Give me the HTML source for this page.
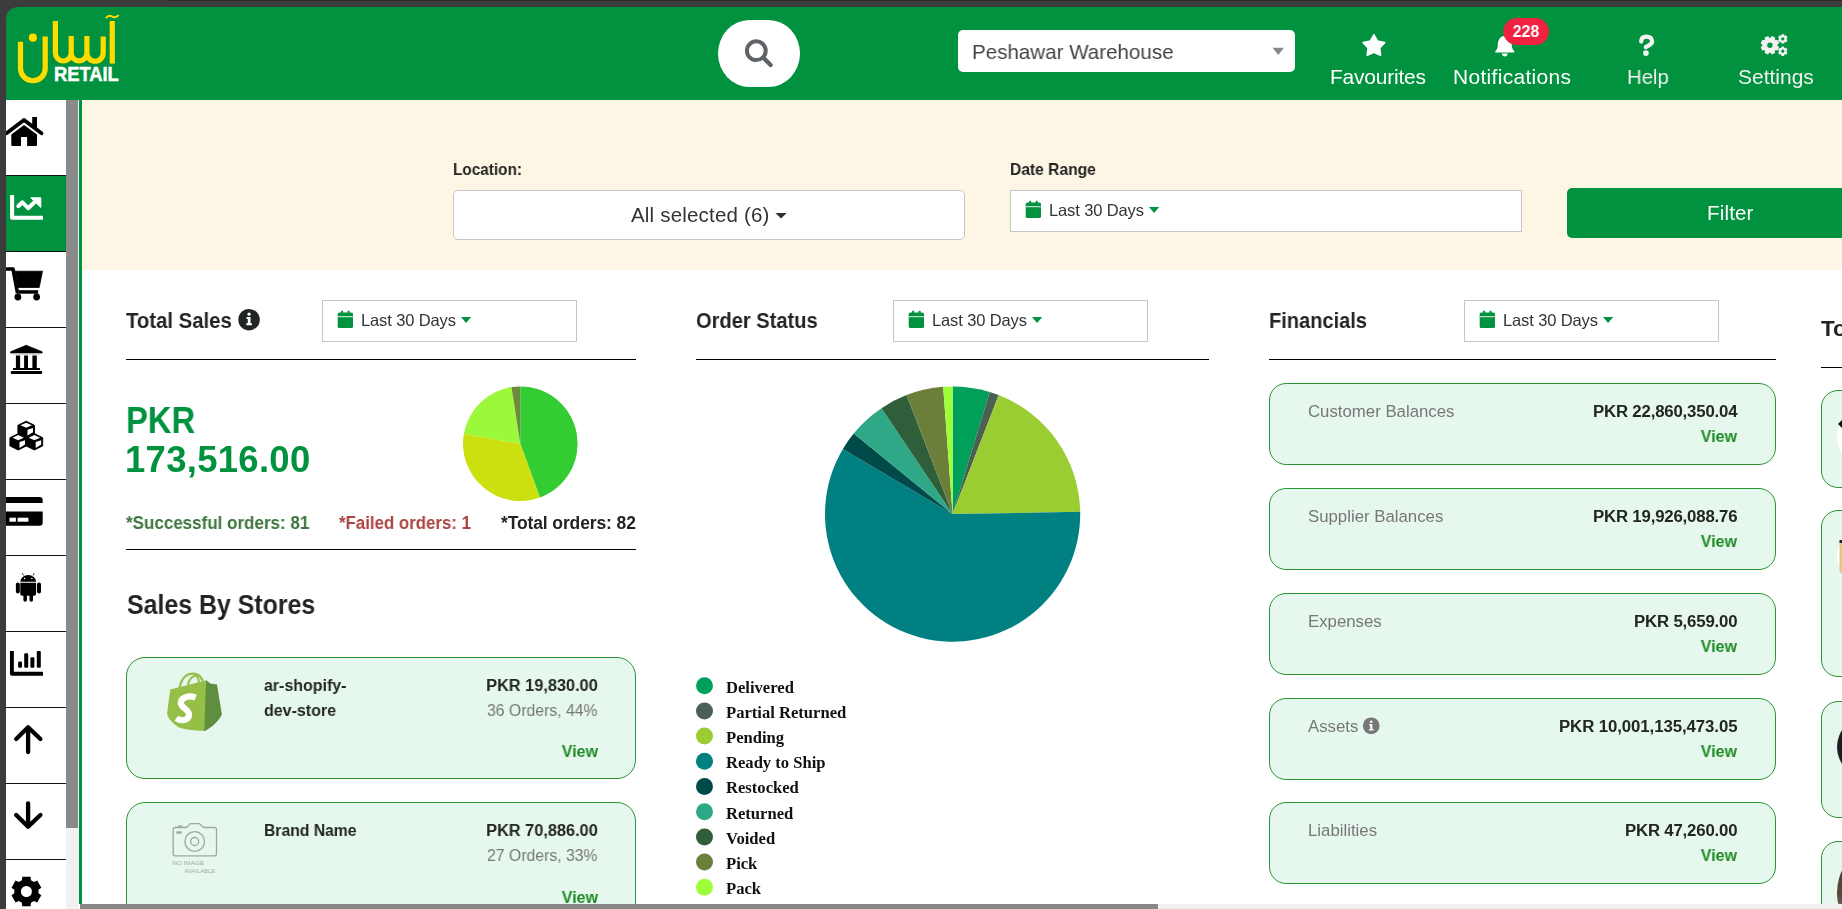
<!DOCTYPE html>
<html><head><meta charset="utf-8"><style>
html,body{margin:0;padding:0;width:1842px;height:909px;overflow:hidden;background:#fff}
body{position:relative;font-family:"Liberation Sans", sans-serif}
.b{position:absolute}
.t{position:absolute;white-space:pre;will-change:transform}
svg.ov{position:absolute;left:0;top:0;width:1842px;height:909px;overflow:hidden}
</style></head><body>
<div class=b style='left:0px;top:0px;width:1842px;height:7px;background:#3c3c3c'></div>
<div class=b style='left:168px;top:0px;width:1674px;height:1px;background:#2c2c2c'></div>
<div class=b style='left:0px;top:0px;width:6px;height:909px;background:#3c3c3c'></div>
<div class=b style='left:6px;top:7px;width:20px;height:20px;background:#3c3c3c'></div>
<div class=b style='left:6px;top:7px;width:1836px;height:93px;background:#00923f;border-top-left-radius:12px'></div>
<div class=b style='left:718px;top:20px;width:82px;height:67px;background:#fff;border-radius:32px/34px'></div>
<div class=b style='left:958px;top:30px;width:337px;height:42px;background:#fff;border-radius:5px'></div>
<div class=b style='left:6px;top:100px;width:60px;height:809px;background:#fff'></div>
<div class=b style='left:6px;top:176px;width:60px;height:75.5px;background:#00923f'></div>
<div class=b style='left:6px;top:175.0px;width:60px;height:1px;background:#111'></div>
<div class=b style='left:6px;top:251.0px;width:60px;height:1px;background:#111'></div>
<div class=b style='left:6px;top:327.0px;width:60px;height:1px;background:#111'></div>
<div class=b style='left:6px;top:403.0px;width:60px;height:1px;background:#111'></div>
<div class=b style='left:6px;top:479.0px;width:60px;height:1px;background:#111'></div>
<div class=b style='left:6px;top:555.0px;width:60px;height:1px;background:#111'></div>
<div class=b style='left:6px;top:631.0px;width:60px;height:1px;background:#111'></div>
<div class=b style='left:6px;top:707.0px;width:60px;height:1px;background:#111'></div>
<div class=b style='left:6px;top:783.0px;width:60px;height:1px;background:#111'></div>
<div class=b style='left:6px;top:859.0px;width:60px;height:1px;background:#111'></div>
<div class=b style='left:66.3px;top:100px;width:12.4px;height:809px;background:#f1f1f1'></div>
<div class=b style='left:66.3px;top:100px;width:12.2px;height:728px;background:#8a8a8a'></div>
<div class=b style='left:78.5px;top:100px;width:0.5px;height:804px;background:#fff'></div>
<div class=b style='left:79px;top:100px;width:2.6px;height:804px;background:#00923f'></div>
<div class=b style='left:81.6px;top:100px;width:1761px;height:170px;background:#fdf6e4'></div>
<div class=b style='left:453px;top:190px;width:512px;height:50px;background:#fff;border:1px solid #c6c6c6;border-radius:5px;box-sizing:border-box'></div>
<div class=b style='left:1010px;top:190px;width:512px;height:42px;background:#fff;border:1px solid #c6c6c6;box-sizing:border-box'></div>
<div class=b style='left:1567px;top:188px;width:326px;height:50px;background:#00923f;border-radius:5px'></div>
<div class=b style='left:322px;top:300px;width:255px;height:42px;background:#fff;border:1px solid #c6c6c6;box-sizing:border-box'></div>
<div class=b style='left:126px;top:358.6px;width:510px;height:1.6px;background:#000'></div>
<div class=b style='left:893px;top:300px;width:255px;height:42px;background:#fff;border:1px solid #c6c6c6;box-sizing:border-box'></div>
<div class=b style='left:696px;top:358.6px;width:513px;height:1.6px;background:#000'></div>
<div class=b style='left:1464px;top:300px;width:255px;height:42px;background:#fff;border:1px solid #c6c6c6;box-sizing:border-box'></div>
<div class=b style='left:1269px;top:358.6px;width:507px;height:1.6px;background:#000'></div>
<div class=b style='left:1821px;top:366.8px;width:100px;height:1.6px;background:#000'></div>
<div class=b style='left:126px;top:548.8px;width:510px;height:1.3px;background:#000'></div>
<div class=b style='left:126px;top:657px;width:510px;height:122px;background:#e6f7ee;border:1px solid #2b9433;border-radius:19px;box-sizing:border-box'></div>
<div class=b style='left:126px;top:802px;width:510px;height:122px;background:#e6f7ee;border:1px solid #2b9433;border-radius:19px;box-sizing:border-box'></div>
<div class=b style='left:1269px;top:383px;width:507px;height:82px;background:#e6f7ee;border:1px solid #2b9433;border-radius:17px;box-sizing:border-box'></div>
<div class=b style='left:1269px;top:488px;width:507px;height:82px;background:#e6f7ee;border:1px solid #2b9433;border-radius:17px;box-sizing:border-box'></div>
<div class=b style='left:1269px;top:593px;width:507px;height:82px;background:#e6f7ee;border:1px solid #2b9433;border-radius:17px;box-sizing:border-box'></div>
<div class=b style='left:1269px;top:698px;width:507px;height:82px;background:#e6f7ee;border:1px solid #2b9433;border-radius:17px;box-sizing:border-box'></div>
<div class=b style='left:1269px;top:802px;width:507px;height:82px;background:#e6f7ee;border:1px solid #2b9433;border-radius:17px;box-sizing:border-box'></div>
<div class=b style='left:1821px;top:390px;width:200px;height:97.5px;background:#e6f7ee;border:1px solid #2b9433;border-radius:17px;box-sizing:border-box'></div>
<div class=b style='left:1821px;top:510.3px;width:200px;height:166.5px;background:#e6f7ee;border:1px solid #2b9433;border-radius:17px;box-sizing:border-box'></div>
<div class=b style='left:1821px;top:700.8px;width:200px;height:117px;background:#e6f7ee;border:1px solid #2b9433;border-radius:17px;box-sizing:border-box'></div>
<div class=b style='left:1821px;top:840.9px;width:200px;height:120px;background:#e6f7ee;border:1px solid #2b9433;border-radius:17px;box-sizing:border-box'></div>
<svg class="ov" viewBox="0 0 1842 909">
<g fill="none" stroke="#ffdc00" stroke-width="5.2"><path d="M20.5 41.7 V68.4 A12.35 12.35 0 0 0 45.2 68.4 V36.4"/><path d="M55.4 21 V53.1 A7.9 7.9 0 0 0 71.2 53.1 V36 M71.2 53.1 A7.85 7.85 0 0 0 86.9 53.1 V36 M86.9 53.1 A8.15 8.15 0 0 0 103.2 53.1 V36.4"/><path d="M112.25 21 V63.6"/></g><circle cx="32.9" cy="37.7" r="4.1" fill="#ffdc00"/><path d="M105.8 18.2 Q108.5 14.5 112.3 16.6 Q115.8 18.6 118.8 15.2" fill="none" stroke="#ffdc00" stroke-width="1.9"/><text x="53.9" y="80.8" font-family="Liberation Sans" font-weight="700" font-size="19.6" fill="#fff" stroke="#fff" stroke-width="0.45" textLength="64.9" lengthAdjust="spacingAndGlyphs">RETAIL</text>
<circle cx="756.3" cy="50.7" r="9.4" fill="none" stroke="#5f6368" stroke-width="4"/><path d="M763.2 57.6 L770.6 65" stroke="#5f6368" stroke-width="4.3" stroke-linecap="round"/>
<path d="M1272.6 47.8 H1283.9 L1278.25 55 Z" fill="#888"/>
<path d="M1373.90 34.90 L1377.43 41.25 L1384.55 42.64 L1379.61 47.95 L1380.48 55.16 L1373.90 52.10 L1367.32 55.16 L1368.19 47.95 L1363.25 42.64 L1370.37 41.25Z" fill="#fff" stroke="#fff" stroke-width="1.8" stroke-linejoin="round"/>
<path d="M1504.8 36 C1499.5 36 1497.8 41 1497.8 45 C1497.8 48.5 1496.5 50.2 1495.3 51.3 V52.6 H1514.3 V51.3 C1513.1 50.2 1511.8 48.5 1511.8 45 C1511.8 41 1510.1 36 1504.8 36Z" fill="#fff"/><path d="M1502 53.6 A2.8 2.8 0 0 0 1507.6 53.6Z" fill="#fff"/>
<rect x="1503.3" y="18.1" width="45.7" height="26.8" rx="13.4" fill="#f0223f"/>
<path d="M1641.2 41.5 C1641.2 38.2 1643.4 36.7 1646.6 36.7 C1649.9 36.7 1652.1 38.6 1652.1 41.4 C1652.1 44.6 1648.4 45.1 1645.9 47 V47.3" fill="none" stroke="#f2f2f2" stroke-width="4.3" stroke-linecap="round" stroke-linejoin="round"/><circle cx="1645.9" cy="53.1" r="2.85" fill="#f2f2f2"/>
<path d="M1770.60 37.63 L1771.70 35.97 L1775.15 37.40 L1774.75 39.35 L1775.75 40.35 L1777.70 39.95 L1779.13 43.40 L1777.47 44.50 L1777.47 45.90 L1779.13 47.00 L1777.70 50.45 L1775.75 50.05 L1774.75 51.05 L1775.15 53.00 L1771.70 54.43 L1770.60 52.77 L1769.20 52.77 L1768.10 54.43 L1764.65 53.00 L1765.05 51.05 L1764.05 50.05 L1762.10 50.45 L1760.67 47.00 L1762.33 45.90 L1762.33 44.50 L1760.67 43.40 L1762.10 39.95 L1764.05 40.35 L1765.05 39.35 L1764.65 37.40 L1768.10 35.97 L1769.20 37.63Z M1772.60 45.20 A2.7 2.7 0 1 0 1767.20 45.20 A2.7 2.7 0 1 0 1772.60 45.20Z" fill="#f2f2f2" fill-rule="evenodd"/>
<path d="M1781.32 35.40 L1781.45 34.19 L1784.15 34.19 L1784.28 35.40 L1785.09 35.87 L1786.20 35.37 L1787.56 37.72 L1786.57 38.43 L1786.57 39.37 L1787.56 40.08 L1786.20 42.43 L1785.09 41.93 L1784.28 42.40 L1784.15 43.61 L1781.45 43.61 L1781.32 42.40 L1780.51 41.93 L1779.40 42.43 L1778.04 40.08 L1779.03 39.37 L1779.03 38.43 L1778.04 37.72 L1779.40 35.37 L1780.51 35.87Z M1784.40 38.90 A1.6 1.6 0 1 0 1781.20 38.90 A1.6 1.6 0 1 0 1784.40 38.90Z" fill="#f2f2f2" fill-rule="evenodd"/>
<path d="M1781.32 47.70 L1781.45 46.49 L1784.15 46.49 L1784.28 47.70 L1785.09 48.17 L1786.20 47.67 L1787.56 50.02 L1786.57 50.73 L1786.57 51.67 L1787.56 52.38 L1786.20 54.73 L1785.09 54.23 L1784.28 54.70 L1784.15 55.91 L1781.45 55.91 L1781.32 54.70 L1780.51 54.23 L1779.40 54.73 L1778.04 52.38 L1779.03 51.67 L1779.03 50.73 L1778.04 50.02 L1779.40 47.67 L1780.51 48.17Z M1784.40 51.20 A1.6 1.6 0 1 0 1781.20 51.20 A1.6 1.6 0 1 0 1784.40 51.20Z" fill="#f2f2f2" fill-rule="evenodd"/>
<path d="M6.5 133.3 L24 120 L41.5 133.3" fill="none" stroke="#000" stroke-width="3.8" stroke-linecap="round" stroke-linejoin="round"/><rect x="32.2" y="117" width="4.8" height="10" fill="#000"/><path d="M11.3 134.6 L24 125 L37 134.6 V144.9 A1 1 0 0 1 36 145.9 H27.1 V136.9 H21 V145.9 H12.3 A1 1 0 0 1 11.3 144.9Z" fill="#000"/>
<path d="M12.1 195.1 V217.8 H43" fill="none" stroke="#fff" stroke-width="4.1" stroke-linecap="butt" stroke-linejoin="round"/><path d="M18.3 206.2 L22.4 202.3 L28.2 208.2 L36 200.8" fill="none" stroke="#fff" stroke-width="4" stroke-linecap="round" stroke-linejoin="round"/><path d="M30.8 197.8 H40.8 V207.4 Z" fill="#fff" stroke="#fff" stroke-width="1" stroke-linejoin="round"/>
<path d="M4 269 H13 L17.5 293" fill="none" stroke="#000" stroke-width="3.6" stroke-linejoin="round"/><path d="M15 271.2 H42.5 L39.2 287.5 H18.1 Z" fill="#000" stroke="#000" stroke-width="0.8" stroke-linejoin="round"/><rect x="16.8" y="290.2" width="21.3" height="3.5" fill="#000"/><circle cx="17.9" cy="297" r="3.4" fill="#000"/><circle cx="36.6" cy="297" r="3.4" fill="#000"/>
<path d="M26.2 345.3 L42.1 351.8 V353 H10.6 V351.8 Z" fill="#000" stroke="#000" stroke-width="0.8" stroke-linejoin="round"/><rect x="13" y="353.2" width="26.9" height="1.4" fill="#bbb"/><rect x="15.9" y="355.5" width="4.2" height="13" fill="#000"/><rect x="24.1" y="355.5" width="3.9" height="13" fill="#000"/><rect x="32.4" y="355.5" width="4.4" height="13" fill="#000"/><rect x="13" y="368" width="26.9" height="2" fill="#000"/><rect x="10.8" y="371" width="31.3" height="3" rx="0.8" fill="#000"/>
<path d="M26.2 421.2 L34.5 425.3 V433.49999999999994 L26.2 437.59999999999997 L17.9 433.49999999999994 V425.3 Z" fill="#000" stroke="#000" stroke-width="0.9" stroke-linejoin="round"/><path d="M26.2 422.7 L31.9 425.3 L26.2 427.8 L20.5 425.3 Z" fill="#fff"/><path d="M27.5 429.7 L33.0 427.90000000000003 V432.19999999999993 L27.5 435.49999999999994 Z" fill="#fff"/><path d="M18.200000000000003 433.6 L26.5 437.70000000000005 V445.9 L18.200000000000003 450.0 L9.9 445.9 V437.70000000000005 Z" fill="#000" stroke="#000" stroke-width="0.9" stroke-linejoin="round"/><path d="M18.200000000000003 435.1 L23.9 437.70000000000005 L18.200000000000003 440.20000000000005 L12.5 437.70000000000005 Z" fill="#fff"/><path d="M19.500000000000004 442.1 L25.0 440.30000000000007 V444.59999999999997 L19.500000000000004 447.9 Z" fill="#fff"/><path d="M34.400000000000006 433.6 L42.7 437.70000000000005 V445.9 L34.400000000000006 450.0 L26.1 445.9 V437.70000000000005 Z" fill="#000" stroke="#000" stroke-width="0.9" stroke-linejoin="round"/><path d="M34.400000000000006 435.1 L40.1 437.70000000000005 L34.400000000000006 440.20000000000005 L28.700000000000003 437.70000000000005 Z" fill="#fff"/><path d="M35.7 442.1 L41.2 440.30000000000007 V444.59999999999997 L35.7 447.9 Z" fill="#fff"/>
<path d="M4 497 H39.7 A3 3 0 0 1 42.7 500 V503 H4 Z" fill="#000"/><path d="M4 511.6 H42.7 V522.7 A3 3 0 0 1 39.7 525.7 H4 Z" fill="#000"/><rect x="9.5" y="517.7" width="6.4" height="4" fill="#fff"/><rect x="17.6" y="517.7" width="10.8" height="4" fill="#fff"/>
<path d="M20.3 581.7 A7.9 6.8 0 0 1 36.1 581.7 Z" fill="#000"/><path d="M23.5 575.5 L22.3 573 M33 575.5 L34.3 573" stroke="#000" stroke-width="0.7"/><circle cx="24.6" cy="578.6" r="0.75" fill="#fff"/><circle cx="31.9" cy="578.6" r="0.75" fill="#fff"/><path d="M20.3 582.8 H36.1 V594 A1.8 1.8 0 0 1 34.3 595.8 H22.1 A1.8 1.8 0 0 1 20.3 594 Z" fill="#000"/><rect x="15.9" y="582.4" width="3.9" height="11" rx="1.95" fill="#000"/><rect x="37" y="582.4" width="4" height="11" rx="2" fill="#000"/><rect x="23.4" y="594" width="3.5" height="7.8" rx="1.75" fill="#000"/><rect x="29.5" y="594" width="3.5" height="7.8" rx="1.75" fill="#000"/>
<path d="M11.9 651 V673.8 H43" fill="none" stroke="#000" stroke-width="3.9" stroke-linecap="butt" stroke-linejoin="round"/><rect x="18.1" y="661.6" width="3.9" height="6.2" rx="1.3" fill="#000"/><rect x="24.2" y="653.2" width="4" height="14.6" rx="1.3" fill="#000"/><rect x="30.4" y="657.2" width="4" height="10.6" rx="1.3" fill="#000"/><rect x="36.8" y="651" width="4" height="16.8" rx="1.3" fill="#000"/>
<path d="M28.1 752 V727.5 M16.2 739 L28.1 727.2 L40.4 739" fill="none" stroke="#000" stroke-width="4.3" stroke-linecap="round" stroke-linejoin="round"/><path d="M28.1 803.3 V826.8 M16.2 815 L28.1 826.8 L40.4 815" fill="none" stroke="#000" stroke-width="4.3" stroke-linecap="round" stroke-linejoin="round"/>
<path d="M21.87 880.17 L22.29 876.66 L30.51 876.66 L30.93 880.17 L33.95 881.92 L37.20 880.52 L41.31 887.64 L38.47 889.75 L38.47 893.25 L41.31 895.36 L37.20 902.48 L33.95 901.08 L30.93 902.83 L30.51 906.34 L22.29 906.34 L21.87 902.83 L18.85 901.08 L15.60 902.48 L11.49 895.36 L14.33 893.25 L14.33 889.75 L11.49 887.64 L15.60 880.52 L18.85 881.92Z M31.90 891.50 A5.5 5.5 0 1 0 20.90 891.50 A5.5 5.5 0 1 0 31.90 891.50Z" fill="#000" fill-rule="evenodd"/>
<path d="M775.4 213 H786.7 L781.05 218.6 Z" fill="#333"/>
<rect x="1025.7" y="202.4" width="15.3" height="15.6" rx="1.6" fill="#00923f"/><rect x="1025.9" y="206.20000000000002" width="14.9" height="1" fill="#e6f2e6"/><rect x="1029.1000000000001" y="200.8" width="2" height="3" fill="#00923f"/><rect x="1035.6000000000001" y="200.8" width="2" height="3" fill="#00923f"/>
<path d="M1149 207.1 H1159.2 L1154.1 212.9 Z" fill="#00923f"/>
<rect x="337.7" y="312.40000000000003" width="15.3" height="15.6" rx="1.6" fill="#00923f"/><rect x="337.9" y="316.2" width="14.9" height="1" fill="#e6f2e6"/><rect x="341.09999999999997" y="310.8" width="2" height="3" fill="#00923f"/><rect x="347.59999999999997" y="310.8" width="2" height="3" fill="#00923f"/>
<path d="M461 317.1 H471.2 L466.1 322.9 Z" fill="#00923f"/>
<circle cx="249.05" cy="319.65" r="10.75" fill="#222622"/><circle cx="249.05" cy="314.2" r="1.6" fill="#fff"/><path d="M246.6 317 H250.5 V323.3 H252 V325.2 H246.3 V323.3 H247.8 V318.9 H246.6 Z" fill="#fff"/>
<rect x="908.7" y="312.40000000000003" width="15.3" height="15.6" rx="1.6" fill="#00923f"/><rect x="908.9000000000001" y="316.2" width="14.9" height="1" fill="#e6f2e6"/><rect x="912.1" y="310.8" width="2" height="3" fill="#00923f"/><rect x="918.6" y="310.8" width="2" height="3" fill="#00923f"/>
<path d="M1032 317.1 H1042.2 L1037.1 322.9 Z" fill="#00923f"/>
<rect x="1479.7" y="312.40000000000003" width="15.3" height="15.6" rx="1.6" fill="#00923f"/><rect x="1479.9" y="316.2" width="14.9" height="1" fill="#e6f2e6"/><rect x="1483.1000000000001" y="310.8" width="2" height="3" fill="#00923f"/><rect x="1489.6000000000001" y="310.8" width="2" height="3" fill="#00923f"/>
<path d="M1603 317.1 H1613.2 L1608.1 322.9 Z" fill="#00923f"/>
<path d="M520.3 443.7 L520.30 386.40 A57.3 57.3 0 0 1 539.90 497.54 Z" fill="#33cc33"/><path d="M520.3 443.7 L539.90 497.54 A57.3 57.3 0 0 1 463.87 433.75 Z" fill="#cce010"/><path d="M520.3 443.7 L463.87 433.75 A57.3 57.3 0 0 1 511.45 387.09 Z" fill="#9cf83a"/><path d="M520.3 443.7 L511.45 387.09 A57.3 57.3 0 0 1 520.30 386.40 Z" fill="#6e8b3d"/>
<path d="M179.6 688 C181.2 678.5 186.5 673.6 193 673.6 C197.6 673.6 201 676.3 202.8 681" fill="none" stroke="#95bf47" stroke-width="2.3"/><path d="M187.9 685 C189.4 679 192.2 676 195.4 676 C197.5 676 198.5 678.6 198.9 682" fill="none" stroke="#95bf47" stroke-width="2.1"/><path d="M170.3 689.4 L206.4 680.3 L208 690 L206 731.1 L204.2 731.1 C195 730.6 186 729.6 179.4 727.8 C173 724 168.5 719 167 713.7 Z" fill="#95bf47"/><path d="M206.2 680.3 L210.4 683.6 L217 684.4 L221.9 714.5 C218 722 212 727.5 204.2 731.1 Z" fill="#5e8e3e"/><path d="M195.6 697.6 C189.6 695.2 181.8 696.6 180.8 702.3 C179.9 707.5 189.3 709.2 189 714.8 C188.7 721 180.8 721.4 176.3 718.2" fill="none" stroke="#fff" stroke-width="6.2" stroke-linecap="butt"/>
<g fill="none" stroke="#a4a4a4" stroke-width="1.3"><path d="M175.2 827.5 H186.5 L190.4 823.6 H199.3 L203.6 827.5 H214.5 A2 2 0 0 1 216.5 829.5 V853.8 A2 2 0 0 1 214.5 855.8 H175.2 A2 2 0 0 1 173.2 853.8 V829.5 A2 2 0 0 1 175.2 827.5Z"/><circle cx="194.7" cy="841.5" r="9.8"/><circle cx="194.7" cy="841.5" r="4"/></g><rect x="177.9" y="825.4" width="4.6" height="2.2" fill="#a4a4a4"/><rect x="176.4" y="831.3" width="5.4" height="2.4" fill="#a4a4a4"/><text x="172.2" y="864.7" font-family="Liberation Sans" font-size="5.4" fill="#a8a8a8" textLength="32" lengthAdjust="spacingAndGlyphs">NO IMAGE</text><text x="184.3" y="872.6" font-family="Liberation Sans" font-size="5.4" fill="#a8a8a8" textLength="31" lengthAdjust="spacingAndGlyphs">AVAILABLE</text>
<path d="M952.6 514.1 L952.60 386.50 A127.6 127.6 0 0 1 989.78 392.04 Z" fill="#00a05a"/><path d="M952.6 514.1 L989.78 392.04 A127.6 127.6 0 0 1 998.69 395.12 Z" fill="#4b5f55"/><path d="M952.6 514.1 L998.69 395.12 A127.6 127.6 0 0 1 1080.18 511.74 Z" fill="#9acd32"/><path d="M952.6 514.1 L1080.18 511.74 A127.6 127.6 0 1 1 842.89 448.94 Z" fill="#008080"/><path d="M952.6 514.1 L842.89 448.94 A127.6 127.6 0 0 1 853.68 433.49 Z" fill="#004a4a"/><path d="M952.6 514.1 L853.68 433.49 A127.6 127.6 0 0 1 881.46 408.17 Z" fill="#2ea886"/><path d="M952.6 514.1 L881.46 408.17 A127.6 127.6 0 0 1 906.51 395.12 Z" fill="#2f5f3a"/><path d="M952.6 514.1 L906.51 395.12 A127.6 127.6 0 0 1 943.18 386.85 Z" fill="#6b7f3a"/><path d="M952.6 514.1 L943.18 386.85 A127.6 127.6 0 0 1 952.60 386.50 Z" fill="#9cff3a"/>
<circle cx="704.5" cy="685.70" r="8.5" fill="#00a05a"/>
<circle cx="704.5" cy="710.90" r="8.5" fill="#4b5f55"/>
<circle cx="704.5" cy="736.10" r="8.5" fill="#9acd32"/>
<circle cx="704.5" cy="761.30" r="8.5" fill="#008080"/>
<circle cx="704.5" cy="786.50" r="8.5" fill="#004a4a"/>
<circle cx="704.5" cy="811.70" r="8.5" fill="#2ea886"/>
<circle cx="704.5" cy="836.90" r="8.5" fill="#2f5f3a"/>
<circle cx="704.5" cy="862.10" r="8.5" fill="#6b7f3a"/>
<circle cx="704.5" cy="887.30" r="8.5" fill="#9cff3a"/>
<circle cx="1371.2" cy="725.8" r="8.4" fill="#777"/><circle cx="1371.2" cy="721.7" r="1.3" fill="#fff"/><path d="M1369.3 724 H1372.3 V728.9 H1373.5 V730.4 H1369 V728.9 H1370.2 V725.4 H1369.3 Z" fill="#fff"/>
<circle cx="1864" cy="437" r="27" fill="#fff"/><path d="M1838 424 L1842 420 L1846 424 L1842 428Z" fill="#111"/>
<circle cx="1862" cy="556" r="25" fill="#fff"/><rect x="1839.5" y="540" width="10" height="33" rx="2" fill="#e3c880"/><rect x="1839.5" y="540" width="10" height="3" fill="#222"/>
<circle cx="1868" cy="747" r="31" fill="#1c1c24"/>
<defs><linearGradient id="gD" x1="0" y1="0" x2="0" y2="1"><stop offset="0" stop-color="#4a3828"/><stop offset="0.55" stop-color="#5a4a3c"/><stop offset="1" stop-color="#b8bcb8"/></linearGradient></defs><ellipse cx="1866" cy="893" rx="29" ry="40" fill="url(#gD)"/>
</svg>
<div class=t style='top:39px;font-size:21px;line-height:25px;font-weight:400;color:#444;transform:scaleX(0.9790);transform-origin:left 50%;left:971.50px;'>Peshawar Warehouse</div>
<div class=t style='top:64px;font-size:21px;line-height:25px;font-weight:400;color:#fff;letter-spacing:-0.23px;left:1329.90px;'>Favourites</div>
<div class=t style='top:64px;font-size:21px;line-height:25px;font-weight:400;color:#fff;letter-spacing:0.30px;left:1453.10px;'>Notifications</div>
<div class=t style='top:64px;font-size:21px;line-height:25px;font-weight:400;color:#f2f2f2;transform:scaleX(0.9675);transform-origin:left 50%;left:1627.00px;'>Help</div>
<div class=t style='top:64px;font-size:21px;line-height:25px;font-weight:400;color:#f2f2f2;letter-spacing:-0.01px;left:1737.50px;'>Settings</div>
<div class=t style='top:22px;font-size:17px;line-height:20px;font-weight:700;color:#fff;transform:scaleX(0.9374);transform-origin:center 50%;left:1226.20px;width:600px;text-align:center;'>228</div>
<div class=t style='top:159px;font-size:16.5px;line-height:20px;font-weight:700;color:#222;transform:scaleX(0.9293);transform-origin:left 50%;left:453.00px;'>Location:</div>
<div class=t style='top:202px;font-size:20.5px;line-height:25px;font-weight:400;color:#333;letter-spacing:0.19px;left:630.80px;'>All selected (6)</div>
<div class=t style='top:159px;font-size:16.5px;line-height:20px;font-weight:700;color:#222;transform:scaleX(0.9462);transform-origin:left 50%;left:1010.30px;'>Date Range</div>
<div class=t style='top:200px;font-size:16.5px;line-height:20px;font-weight:400;color:#333;letter-spacing:-0.12px;left:1049.20px;'>Last 30 Days</div>
<div class=t style='top:200px;font-size:20.5px;line-height:25px;font-weight:400;color:#fff;letter-spacing:0.17px;left:1707.00px;'>Filter</div>
<div class=t style='top:307px;font-size:22.5px;line-height:27px;font-weight:700;color:#222622;transform:scaleX(0.9040);transform-origin:left 50%;left:126.30px;'>Total Sales</div>
<div class=t style='top:310px;font-size:16.5px;line-height:20px;font-weight:400;color:#333;letter-spacing:-0.12px;left:361.20px;'>Last 30 Days</div>
<div class=t style='top:307px;font-size:22.5px;line-height:27px;font-weight:700;color:#222622;transform:scaleX(0.8929);transform-origin:left 50%;left:695.70px;'>Order Status</div>
<div class=t style='top:310px;font-size:16.5px;line-height:20px;font-weight:400;color:#333;letter-spacing:-0.12px;left:932.20px;'>Last 30 Days</div>
<div class=t style='top:307px;font-size:22.5px;line-height:27px;font-weight:700;color:#222622;transform:scaleX(0.8905);transform-origin:left 50%;left:1268.80px;'>Financials</div>
<div class=t style='top:310px;font-size:16.5px;line-height:20px;font-weight:400;color:#333;letter-spacing:-0.12px;left:1503.20px;'>Last 30 Days</div>
<div class=t style='top:315px;font-size:22.5px;line-height:27px;font-weight:700;color:#222622;left:1821.40px;'>Top Products</div>
<div class=t style='top:399px;font-size:36.5px;line-height:44px;font-weight:700;color:#00923f;transform:scaleX(0.8978);transform-origin:left 50%;left:125.50px;'>PKR</div>
<div class=t style='top:438px;font-size:36.5px;line-height:44px;font-weight:700;color:#00923f;letter-spacing:0.28px;left:125.20px;'>173,516.00</div>
<div class=t style='top:513px;font-size:17.5px;line-height:21px;font-weight:700;color:#3c763d;transform:scaleX(0.9714);transform-origin:left 50%;left:126.10px;'>*Successful orders: 81</div>
<div class=t style='top:513px;font-size:17.5px;line-height:21px;font-weight:700;color:#a94442;transform:scaleX(0.9618);transform-origin:left 50%;left:339.30px;'>*Failed orders: 1</div>
<div class=t style='top:513px;font-size:17.5px;line-height:21px;font-weight:700;color:#222622;letter-spacing:-0.12px;left:501.40px;'>*Total orders: 82</div>
<div class=t style='top:589px;font-size:27px;line-height:32px;font-weight:700;color:#222622;transform:scaleX(0.9225);transform-origin:left 50%;left:126.60px;'>Sales By Stores</div>
<div class=t style='top:676px;font-size:16.8px;line-height:20px;font-weight:700;color:#222622;transform:scaleX(0.9514);transform-origin:left 50%;left:263.80px;'>ar-shopify-</div>
<div class=t style='top:701px;font-size:16.8px;line-height:20px;font-weight:700;color:#222622;transform:scaleX(0.9531);transform-origin:left 50%;left:263.80px;'>dev-store</div>
<div class=t style='top:676px;font-size:16.8px;line-height:20px;font-weight:700;color:#222622;transform:scaleX(0.9725);transform-origin:right 50%;right:1244.40px;text-align:right;'>PKR 19,830.00</div>
<div class=t style='top:701px;font-size:16.8px;line-height:20px;font-weight:400;color:#777;transform:scaleX(0.9402);transform-origin:right 50%;right:1244.40px;text-align:right;'>36 Orders, 44%</div>
<div class=t style='top:742px;font-size:16.8px;line-height:20px;font-weight:700;color:#1f8b24;transform:scaleX(0.9538);transform-origin:right 50%;right:1244.40px;text-align:right;'>View</div>
<div class=t style='top:821px;font-size:16.8px;line-height:20px;font-weight:700;color:#222622;transform:scaleX(0.9357);transform-origin:left 50%;left:264.40px;'>Brand Name</div>
<div class=t style='top:821px;font-size:16.8px;line-height:20px;font-weight:700;color:#222622;transform:scaleX(0.9725);transform-origin:right 50%;right:1244.40px;text-align:right;'>PKR 70,886.00</div>
<div class=t style='top:846px;font-size:16.8px;line-height:20px;font-weight:400;color:#777;transform:scaleX(0.9402);transform-origin:right 50%;right:1244.40px;text-align:right;'>27 Orders, 33%</div>
<div class=t style='top:888px;font-size:16.8px;line-height:20px;font-weight:700;color:#1f8b24;transform:scaleX(0.9538);transform-origin:right 50%;right:1244.40px;text-align:right;'>View</div>
<div class=t style='top:678px;font-size:16.6px;line-height:20px;font-weight:700;color:#111;font-family:"Liberation Serif", serif;left:725.70px;'>Delivered</div>
<div class=t style='top:703px;font-size:16.6px;line-height:20px;font-weight:700;color:#111;font-family:"Liberation Serif", serif;left:725.70px;'>Partial Returned</div>
<div class=t style='top:728px;font-size:16.6px;line-height:20px;font-weight:700;color:#111;font-family:"Liberation Serif", serif;left:725.70px;'>Pending</div>
<div class=t style='top:753px;font-size:16.6px;line-height:20px;font-weight:700;color:#111;font-family:"Liberation Serif", serif;left:725.70px;'>Ready to Ship</div>
<div class=t style='top:778px;font-size:16.6px;line-height:20px;font-weight:700;color:#111;font-family:"Liberation Serif", serif;left:725.70px;'>Restocked</div>
<div class=t style='top:804px;font-size:16.6px;line-height:20px;font-weight:700;color:#111;font-family:"Liberation Serif", serif;left:725.70px;'>Returned</div>
<div class=t style='top:829px;font-size:16.6px;line-height:20px;font-weight:700;color:#111;font-family:"Liberation Serif", serif;left:725.70px;'>Voided</div>
<div class=t style='top:854px;font-size:16.6px;line-height:20px;font-weight:700;color:#111;font-family:"Liberation Serif", serif;left:725.70px;'>Pick</div>
<div class=t style='top:879px;font-size:16.6px;line-height:20px;font-weight:700;color:#111;font-family:"Liberation Serif", serif;left:725.70px;'>Pack</div>
<div class=t style='top:402px;font-size:16.8px;line-height:20px;font-weight:400;color:#777;left:1308.40px;'>Customer Balances</div>
<div class=t style='top:402px;font-size:16.8px;line-height:20px;font-weight:700;color:#222622;letter-spacing:-0.18px;right:104.78px;text-align:right;'>PKR 22,860,350.04</div>
<div class=t style='top:427px;font-size:16.8px;line-height:20px;font-weight:700;color:#1f8b24;transform:scaleX(0.9538);transform-origin:right 50%;right:104.60px;text-align:right;'>View</div>
<div class=t style='top:507px;font-size:16.8px;line-height:20px;font-weight:400;color:#777;left:1308.40px;'>Supplier Balances</div>
<div class=t style='top:507px;font-size:16.8px;line-height:20px;font-weight:700;color:#222622;letter-spacing:-0.18px;right:104.78px;text-align:right;'>PKR 19,926,088.76</div>
<div class=t style='top:532px;font-size:16.8px;line-height:20px;font-weight:700;color:#1f8b24;transform:scaleX(0.9538);transform-origin:right 50%;right:104.60px;text-align:right;'>View</div>
<div class=t style='top:612px;font-size:16.8px;line-height:20px;font-weight:400;color:#777;left:1308.40px;'>Expenses</div>
<div class=t style='top:612px;font-size:16.8px;line-height:20px;font-weight:700;color:#222622;letter-spacing:-0.17px;right:104.77px;text-align:right;'>PKR 5,659.00</div>
<div class=t style='top:637px;font-size:16.8px;line-height:20px;font-weight:700;color:#1f8b24;transform:scaleX(0.9538);transform-origin:right 50%;right:104.60px;text-align:right;'>View</div>
<div class=t style='top:717px;font-size:16.8px;line-height:20px;font-weight:400;color:#777;left:1308.40px;'>Assets</div>
<div class=t style='top:717px;font-size:16.8px;line-height:20px;font-weight:700;color:#222622;letter-spacing:-0.08px;right:104.68px;text-align:right;'>PKR 10,001,135,473.05</div>
<div class=t style='top:742px;font-size:16.8px;line-height:20px;font-weight:700;color:#1f8b24;transform:scaleX(0.9538);transform-origin:right 50%;right:104.60px;text-align:right;'>View</div>
<div class=t style='top:821px;font-size:16.8px;line-height:20px;font-weight:400;color:#777;left:1308.40px;'>Liabilities</div>
<div class=t style='top:821px;font-size:16.8px;line-height:20px;font-weight:700;color:#222622;letter-spacing:-0.19px;right:104.79px;text-align:right;'>PKR 47,260.00</div>
<div class=t style='top:846px;font-size:16.8px;line-height:20px;font-weight:700;color:#1f8b24;transform:scaleX(0.9538);transform-origin:right 50%;right:104.60px;text-align:right;'>View</div>
<div class=b style='left:0;top:100px;width:6px;height:809px;background:#3c3c3c'></div>
<div class=b style='left:80px;top:904px;width:1762px;height:5px;background:#f0f0f0'></div>
<div class=b style='left:80px;top:904px;width:1078px;height:5px;background:#888'></div>
</body></html>
